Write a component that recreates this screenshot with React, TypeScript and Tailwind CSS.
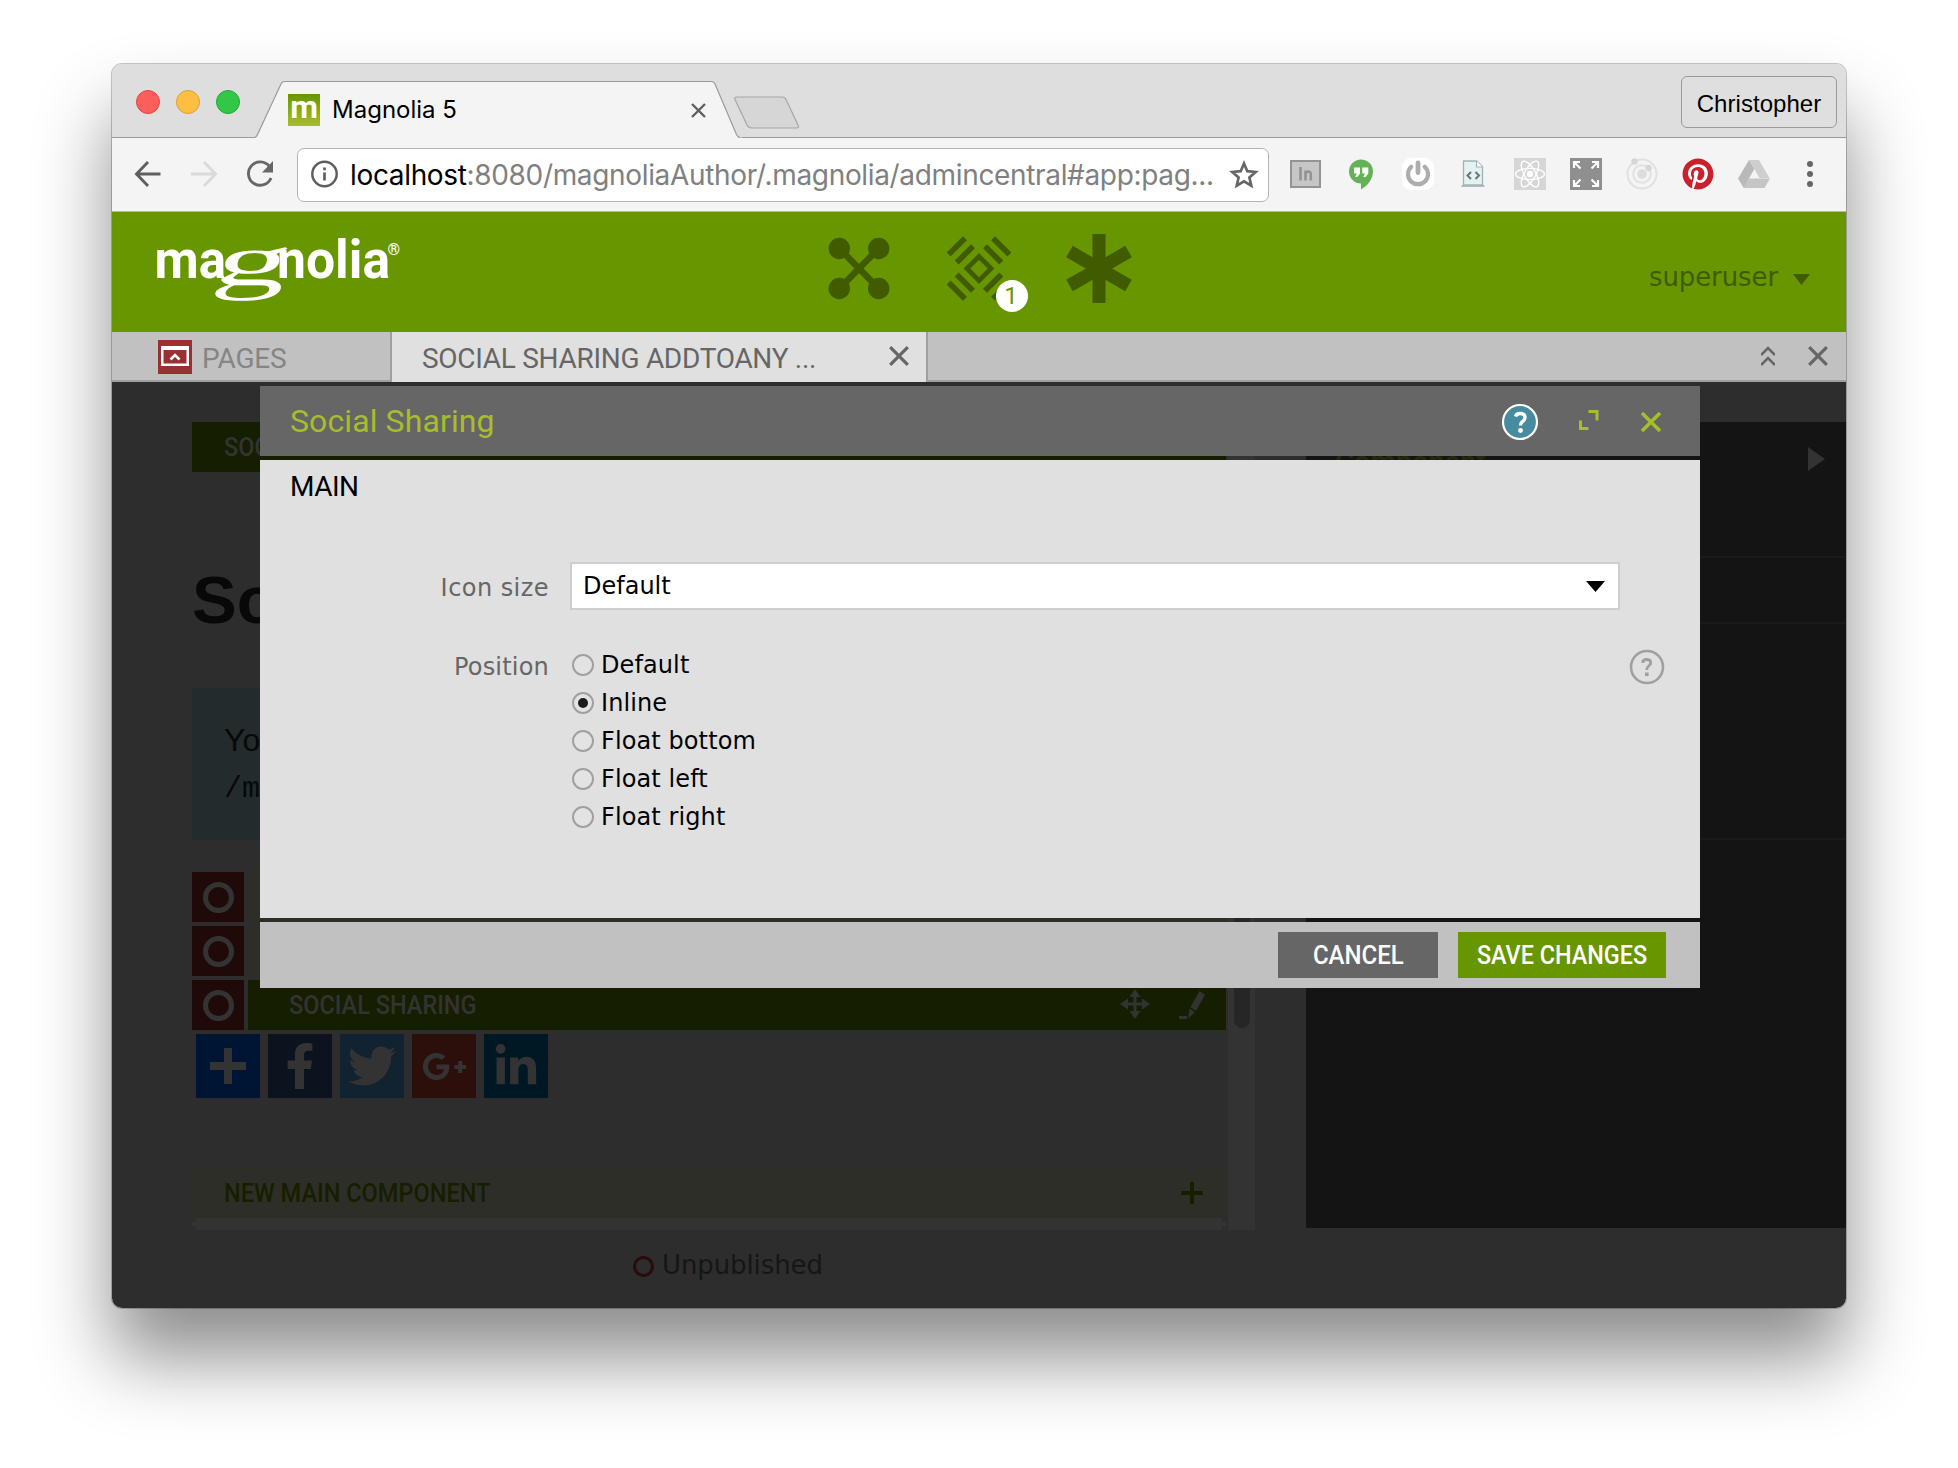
import React from "react";
import { FaFacebookF, FaGooglePlusG, FaLinkedinIn, FaPinterest, FaTwitter } from "react-icons/fa";

function WindowTabStrip() {
  return (
    <div className="flex h-[74px] shrink-0 items-start border-b border-[#9b9b9b] bg-[#dedede]">
      <div className="mt-[26px] ml-6 flex gap-4">
        <span className="size-6 rounded-full border border-[#e0443e] bg-[#fc5f5b]" />
        <span className="size-6 rounded-full border border-[#dea034] bg-[#fdbe41]" />
        <span className="size-6 rounded-full border border-[#23a833] bg-[#33c748]" />
      </div>
      <div className="relative mt-[17px] ml-[14px] h-[57px] w-[488px]">
        <svg className="absolute inset-0" width="488" height="57" viewBox="0 0 488 57">
          <path d="M0 57V56.5H1.5Q3 56 4 53.5L27 3Q28 .5 31 .5H457Q460 .5 461 3L482.500 53.500Q484 56.500 486 56.500H488V57Z" fill="#f4f4f4" />
          <path d="M0 56.500H.5Q2.500 56 3.500 53.500L27 3Q28 .5 31 .5H457Q460 .5 461 3L482.500 53.500Q484 56.500 486 56.500" fill="none" stroke="#9b9b9b" strokeWidth="1.2" />
        </svg>
        <div className="relative mt-[13px] flex h-8 items-center pl-[34px]">
          <span className="flex size-8 items-center justify-center bg-linear-to-b from-[#679600] to-[#a8bd2b] pb-1.5 font-['Roboto',sans-serif] text-[32px] leading-none font-bold text-white">m</span>
          <span className="-mt-px ml-[12px] font-['Inter',sans-serif] text-[24px] leading-8 whitespace-nowrap text-black">Magnolia 5</span>
          <svg className="mr-[36px] ml-auto" width="15" height="15" viewBox="0 0 15 15">
            <path d="M1 1L14 14M14 1L1 14" stroke="#5f5f5f" strokeWidth="2.400" />
          </svg>
        </div>
      </div>
      <svg className="mt-8 -ml-[10px]" width="70" height="34" viewBox="0 0 70 34">
        <path d="M5 1H50Q53 1 54 3.500L66 29Q67.500 32 64.500 32H20Q16.500 32 15 29L3 3.500Q2 1 5 1Z" fill="#d6d6d6" stroke="#a6a6a6" strokeWidth="1.200" />
      </svg>
      <button className="mt-3 mr-[9px] ml-auto flex h-[52px] w-[156px] items-center justify-center rounded-[6px] border border-[#9b9b9b] bg-[#dfdfdf] pt-[3px] font-['Liberation_Sans',sans-serif] text-[24px] leading-none tracking-[0.05px] text-black">Christopher</button>
    </div>
  );
}

function ExtensionIcons() {
  return (
    <div className="-mt-px ml-[21px] flex gap-6">
      <svg width="32" height="32" viewBox="0 0 32 32">
        <rect x="1" y="3" width="29" height="26" fill="#c6c6c6" stroke="#949494" strokeWidth="2" />
        <path d="M10.500 9V22.500M15.500 12.500V22.500M15.500 17Q15.500 13.500 18.200 13.500T20.800 17V22.500" stroke="#939393" strokeWidth="2.600" fill="none" />
      </svg>
      <svg width="32" height="32" viewBox="0 0 32 32">
        <path d="M15 1.500A12 12 0 0 0 15 25.500V31.500C22 27.500 27 20.500 27 13.500A12 12 0 0 0 15 1.500Z" fill="#63b255" />
        <path d="M8 9.500H14V15.500L11.300 19H9L10.800 15.500H8ZM16.300 9.500H22.300V15.500L19.600 19H17.300L19.100 15.500H16.300Z" fill="#fff" />
      </svg>
      <svg width="32" height="32" viewBox="0 0 32 32">
        <rect width="32" height="32" rx="9" fill="#fff" />
        <path d="M9.300 8.800A10 10 0 1 0 22.700 8.800" fill="none" stroke="#adadad" strokeWidth="4.200" strokeLinecap="round" />
        <path d="M16 5V14.500" stroke="#adadad" strokeWidth="4.800" strokeLinecap="round" />
      </svg>
      <svg width="32" height="32" viewBox="0 0 32 32">
        <path d="M3.500 28H26.500" stroke="#b5bcbc" strokeWidth="2" />
        <path d="M5.500 3H18.500L24.500 8.500V27H5.500Z" fill="#e6f1f1" stroke="#9fb5b5" strokeWidth="1.300" />
        <path d="M18.500 3V9H24.500" fill="#fff" stroke="#9fb5b5" strokeWidth="1.200" />
        <path d="M13 14L9.500 17.500L13 21M17.500 14L21 17.500L17.500 21" fill="none" stroke="#6d7474" strokeWidth="2" />
      </svg>
      <svg width="32" height="32" viewBox="0 0 32 32">
        <rect width="32" height="32" fill="#d6d6d6" />
        <g fill="none" stroke="#fff" strokeWidth="1.400">
          <ellipse cx="16" cy="16" rx="14.500" ry="5.600" />
          <ellipse cx="16" cy="16" rx="14.500" ry="5.600" transform="rotate(60 16 16)" />
          <ellipse cx="16" cy="16" rx="14.500" ry="5.600" transform="rotate(120 16 16)" />
        </g>
        <circle cx="16" cy="16" r="3.200" fill="#fff" />
      </svg>
      <svg width="32" height="32" viewBox="0 0 32 32">
        <rect width="32" height="32" fill="#8f8f8f" />
        <path d="M4 10V4H10M4.500 4.500L10.500 10.500M22 4H28V10M27.500 4.500L21.500 10.500M4 22V28H10M4.500 27.500L10.500 21.500M28 22V28H22M27.500 27.500L21.500 21.500" fill="none" stroke="#fff" strokeWidth="2.200" />
      </svg>
      <svg width="32" height="32" viewBox="0 0 32 32">
        <circle cx="16" cy="16" r="14.500" fill="none" stroke="#e1e1e1" strokeWidth="2" />
        <circle cx="16" cy="16" r="8.800" fill="none" stroke="#e1e1e1" strokeWidth="2" />
        <circle cx="16" cy="16" r="4.800" fill="#dcdcdc" />
        <circle cx="8.500" cy="3.500" r="3.200" fill="#d6d6d6" />
        <circle cx="22.500" cy="10" r="3.200" fill="#d6d6d6" />
      </svg>
      <span className="flex size-8 items-center justify-center rounded-full bg-white">
        <FaPinterest size={32} color="#ca202b" />
      </span>
      <svg width="32" height="32" viewBox="0 0 32 32">
        <path d="M11 2H21L31.500 20H21.500Z" fill="#cecece" />
        <path d="M11 2L16.200 11L5.800 30L0 20.500Z" fill="#b9b9b9" />
        <path d="M10.700 20.500H32L26.500 30H5.500Z" fill="#c5c5c5" />
      </svg>
      <svg width="32" height="32" viewBox="0 0 32 32" fill="#666">
        <circle cx="16" cy="6" r="3" />
        <circle cx="16" cy="16" r="3" />
        <circle cx="16" cy="26" r="3" />
      </svg>
    </div>
  );
}

function Toolbar() {
  return (
    <div className="flex h-[74px] shrink-0 items-center border-b border-[#b6b6b6] bg-[#f4f4f4]">
      <svg className="-mt-px ml-[22px]" width="28" height="28" viewBox="0 0 28 28" fill="none" stroke="#5f5f5f" strokeWidth="2.900">
        <path d="M26.500 14H3M14 2L2.500 14L14 26" />
      </svg>
      <svg className="-mt-px ml-7" width="28" height="28" viewBox="0 0 28 28" fill="none" stroke="#dadada" strokeWidth="2.900">
        <path d="M1 14H25M14 2L25.500 14L14 26" />
      </svg>
      <svg className="-mt-px ml-7" width="28" height="28" viewBox="0 0 28 28">
        <path d="M23.500 6.500A11.700 11.700 0 1 0 25 18" fill="none" stroke="#676767" strokeWidth="2.900" />
        <path d="M27 1V12.500H16Z" fill="#676767" />
      </svg>
      <div className="ml-[23px] flex h-[54px] w-[972px] items-center rounded-[7px] border border-[#b4b4b4] bg-white pl-3">
        <svg className="-mt-px" width="30" height="30" viewBox="0 0 30 30">
          <circle cx="14.500" cy="15" r="12.200" fill="none" stroke="#5f5f5f" strokeWidth="2.500" />
          <path d="M14.500 13.500V21.500M14.500 8.500V11.200" stroke="#5f5f5f" strokeWidth="2.700" />
        </svg>
        <span className="ml-[10px] font-['Inter',sans-serif] text-[28px] leading-none tracking-[-0.34px] whitespace-nowrap text-[#808080]">
          <span className="text-black">localhost</span>:8080/magnoliaAuthor/.magnolia/admincentral#app:pag...
        </span>
        <svg className="mr-[9px] ml-auto" width="30" height="30" viewBox="0 0 30 30">
          <path d="M15 3.500L18.300 11.200L26.700 12L20.400 17.500L22.300 25.700L15 21.400L7.700 25.700L9.600 17.500L3.300 12L11.700 11.200Z" fill="none" stroke="#666" strokeWidth="2.700" />
        </svg>
      </div>
      <ExtensionIcons />
    </div>
  );
}

function MagnoliaLogo() {
  return (
    <svg className="ml-[38px] block" width="260" height="120" viewBox="150 212 260 120" fill="#fff">
      <g fontFamily="Roboto, sans-serif" fontWeight="700" fontSize="54">
        <text x="154.500" y="277.500" textLength="71.500" lengthAdjust="spacingAndGlyphs">ma</text>
        <text x="277" y="277.500" textLength="113" lengthAdjust="spacingAndGlyphs">nolia</text>
      </g>
      <text transform="translate(211 284.500) skewX(-14) scale(2.720 1.360)" fontFamily="'Liberation Serif', serif" fontSize="54">g</text>
      <text x="387.500" y="255" fontFamily="Roboto, sans-serif" fontWeight="700" fontSize="16">®</text>
    </svg>
  );
}

function AppHeader() {
  return (
    <header className="grid h-[120px] shrink-0 grid-cols-[1fr_auto_1fr] bg-[#679600]">
      <MagnoliaLogo />
      <div className="flex pt-[20px]">
        <svg width="120" height="74" viewBox="799 232 120 74" fill="#405b00" stroke="#405b00">
          <path d="M839.300 248.500L878.700 288.500M878.700 248.500L839.300 288.500" strokeWidth="6.500" />
          <g stroke="none">
            <circle cx="839.300" cy="248.500" r="10.700" />
            <circle cx="878.700" cy="248.500" r="10.700" />
            <circle cx="839.300" cy="288.500" r="10.700" />
            <circle cx="878.700" cy="288.500" r="10.700" />
          </g>
        </svg>
        <div className="relative">
          <svg width="120" height="74" viewBox="-60 -36.500 120 74" fill="#405b00">
            <rect x="-8.500" y="-8.500" width="17" height="17" transform="rotate(45)" fill="none" stroke="#405b00" strokeWidth="4.800" />
            {[45, 135, 225, 315].map((a) => (
              <g key={a} transform={"rotate(" + a + ")"}>
                <rect x="17.200" y="-11.500" width="5.600" height="23" />
                <rect x="28.600" y="-11.500" width="5.600" height="23" />
              </g>
            ))}
          </svg>
          <span className="absolute top-[48px] left-[77px] flex size-8 items-center justify-center rounded-full bg-white pr-0.5 font-['Roboto',sans-serif] text-[24px] leading-none text-[#679600]">1</span>
        </div>
        <svg width="120" height="74" viewBox="-60 -36.500 120 74" stroke="#405b00" strokeWidth="13">
          <path d="M0 -34.500V34.500M-29.500 -17L29.500 17M29.500 -17L-29.500 17" />
        </svg>
      </div>
      <div className="flex items-center justify-end pt-[10px] pr-[36px]">
        <span className="font-['DejaVu_Sans',sans-serif] text-[26px] leading-none tracking-[-0.1px] text-[#405b00]">superuser</span>
        <svg className="mt-1 ml-[15px]" width="17" height="11" viewBox="0 0 17 11">
          <path d="M0 0H17L8.500 11Z" fill="#405b00" />
        </svg>
      </div>
    </header>
  );
}

function AppTabs() {
  return (
    <nav className="flex h-[50px] shrink-0 bg-[#c1c1c1] font-['Roboto',sans-serif] text-[28px] leading-none">
      <div className="flex w-[280px] items-center border-r-2 border-b-2 border-[#9f9f9f] pl-[46px]">
        <svg className="mt-0.5" width="34" height="34" viewBox="0 0 34 34">
          <rect width="34" height="34" fill="#9b3033" />
          <path d="M3 6H31V26H3ZM5.500 10V23.500H28.500V10Z" fill="#fff" fillRule="evenodd" />
          <path d="M12.500 19.500L17 15L21.500 19.500" fill="none" stroke="#fff" strokeWidth="2.600" />
        </svg>
        <span className="mt-[5px] ml-[10px] tracking-[-0.22px] text-[#858585]">PAGES</span>
      </div>
      <div className="flex w-[536px] items-center border-r-2 border-[#9f9f9f] bg-[#e0e0e0] pb-0.5 pl-[30px]">
        <span className="mt-[5px] tracking-[-0.29px] whitespace-nowrap text-[#666]">SOCIAL SHARING ADDTOANY ...</span>
        <svg className="mr-[17px] ml-auto" width="20" height="20" viewBox="0 0 20 20">
          <path d="M1.200 1.200L18.800 18.800M18.800 1.200L1.200 18.800" stroke="#666" strokeWidth="3.200" />
        </svg>
      </div>
      <div className="flex flex-1 items-center justify-end border-b-2 border-[#9f9f9f] pr-[18px]">
        <svg className="mr-[33px]" width="14" height="20" viewBox="0 0 14 20" fill="none" stroke="#666" strokeWidth="2.600">
          <path d="M0 9L7 2L14 9M0 19L7 12L14 19" />
        </svg>
        <svg width="20" height="20" viewBox="0 0 20 20">
          <path d="M1.200 1.200L18.800 18.800M18.800 1.200L1.200 18.800" stroke="#666" strokeWidth="3.200" />
        </svg>
      </div>
    </nav>
  );
}

function StatusTile() {
  return (
    <span className="flex h-[50px] w-[52px] shrink-0 items-center justify-center bg-[#200909]">
      <span className="size-[31px] rounded-full border-[5px] border-[#333]" />
    </span>
  );
}

function PageEditor() {
  return (
    <section className="mt-10 ml-20 flex w-[1063px] flex-col">
      <div className="flex">
        <div className="w-[1034px] shrink-0">
          <div className="flex h-[50px] items-center bg-[#161e00] pt-px pl-8 font-['Roboto',sans-serif] text-[25px] leading-none font-medium text-[#333]">
            <span className="inline-block origin-left scale-x-[0.94]">SOC</span>
          </div>
          <h1 className="mt-[88px] font-['Liberation_Sans',sans-serif] text-[67px] leading-[80px] font-bold text-[#080808]">Soc</h1>
          <div className="mt-12 h-[152px] bg-[#242b2d] pt-[30px] pl-8 text-[#080808]">
            <p className="font-['Liberation_Sans',sans-serif] text-[32px] leading-[44px]">You</p>
            <p className="mt-[5px] font-['Liberation_Mono',monospace] text-[30px] leading-[44px]">/m</p>
          </div>
          <div className="mt-8 flex flex-col gap-1">
            <div className="flex gap-1">
              <StatusTile />
              <span className="flex-1 bg-[#2e2e29]" />
            </div>
            <div className="flex gap-1">
              <StatusTile />
              <span className="flex-1 bg-[#2e2e29]" />
            </div>
            <div className="flex gap-1">
              <StatusTile />
              <div className="flex flex-1 items-center bg-[#161e00] pr-[19px] pl-[41px]">
                <span className="inline-block origin-left scale-x-[0.94] pt-px font-['Roboto',sans-serif] text-[25px] leading-none font-medium text-[#333]">SOCIAL SHARING</span>
                <svg className="mt-[-2px] ml-auto" width="30" height="30" viewBox="0 0 30 30" fill="#333">
                  <path d="M15 0L20.500 8H16.500V13.500H22V9.500L30 15L22 20.500V16.500H16.500V22H20.500L15 30L9.500 22H13.500V16.500H8V20.500L0 15L8 9.500V13.500H13.500V8H9.500Z" />
                </svg>
                <svg className="ml-[29px]" width="28" height="28" viewBox="0 0 28 28" fill="#333">
                  <path d="M20.500 0L26 3.800L17 20L11.500 16Z" />
                  <path d="M10.700 17.500L15.800 21.200L9 27.500Z" />
                  <path d="M0 25H8V28H0Z" />
                </svg>
              </div>
            </div>
          </div>
          <div className="mt-1 flex gap-2 pl-1 text-[#333]">
            <span className="flex size-16 items-center justify-center bg-[#001433]">
              <svg width="36" height="36" viewBox="0 0 36 36" fill="currentColor">
                <path d="M14 0H22V14H36V22H22V36H14V22H0V14H14Z" />
              </svg>
            </span>
            <span className="flex size-16 items-center justify-center bg-[#0c121e]"><FaFacebookF size={46} /></span>
            <span className="flex size-16 items-center justify-center bg-[#112230]"><FaTwitter size={48} /></span>
            <span className="flex size-16 items-center justify-center bg-[#2c0f0b]">
              <FaGooglePlusG size={45} />
            </span>
            <span className="flex size-16 items-center justify-center bg-[#001824] pt-0.5"><FaLinkedinIn size={46} /></span>
          </div>
          <div className="mt-[70px] flex h-[50px] items-center justify-between bg-[#2e2e29] pr-[23px] pl-8">
            <span className="inline-block origin-left scale-x-[0.942] font-['Roboto',sans-serif] text-[25px] leading-none font-medium text-[#161e00]">NEW MAIN COMPONENT</span>
            <svg width="22" height="22" viewBox="0 0 22 22">
              <path d="M11 0V22M0 11H22" stroke="#161e00" strokeWidth="4" />
            </svg>
          </div>
          <div className="flex h-3 items-center">
            <span className="size-1 bg-[#333]" />
            <span className="h-3 flex-1 bg-[#333]" />
            <span className="size-1 bg-[#333]" />
          </div>
        </div>
        <div className="ml-0.5 flex w-[27px] justify-center bg-[#333]">
          <span className="mt-[100px] h-[506px] w-4 rounded-full bg-[#262626]" />
        </div>
      </div>
      <div className="mt-[17px] ml-[441px] flex h-9 items-center">
        <span className="mt-[3px] size-[21px] rounded-full border-[3px] border-[#2a0a0a]" />
        <span className="ml-[8px] font-['DejaVu_Sans',sans-serif] text-[26px] leading-none tracking-[-0.1px] text-[#161616]">Unpublished</span>
      </div>
    </section>
  );
}

function ComponentPanel() {
  return (
    <aside className="mt-10 ml-[51px] flex h-[806px] w-[540px] flex-col bg-[#141414]">
      <div className="flex h-[134px] items-start pt-[25px] pr-[21px] pl-[29px]">
        <span className="mt-px font-['Roboto',sans-serif] text-[29px] leading-none font-medium text-[#24290b]">Component</span>
        <svg className="ml-auto" width="17" height="24" viewBox="0 0 17 24">
          <path d="M0 0L17 12L0 24Z" fill="#333" />
        </svg>
      </div>
      <div className="h-[66px] border-t-2 border-[#1a1a1a]" />
      <div className="h-[216px] border-t-2 border-[#1a1a1a]" />
      <div className="flex-1 border-t-2 border-[#1a1a1a]" />
    </aside>
  );
}

const POSITIONS = ["Default", "Inline", "Float bottom", "Float left", "Float right"];

function SharingDialog() {
  return (
    <div className="absolute top-1 left-[148px] flex w-[1440px] flex-col gap-1">
      <div className="flex h-[70px] items-center bg-[#666] pr-[29px] pl-[30px]">
        <h2 className="font-['Roboto',sans-serif] text-[32px] leading-none tracking-[0.1px] text-[#a8bd2b]">Social Sharing</h2>
        <svg className="mt-0.5 ml-auto" width="40" height="40" viewBox="0 0 40 40">
          <circle cx="20" cy="20" r="17" fill="#468c9e" stroke="#fff" strokeWidth="2.200" />
          <path d="M15.500 14.500Q16.500 11.500 20 11.500Q25 11.500 25 15.500Q25 18 22.500 19.500Q20.500 20.800 20.500 23.500" fill="none" stroke="#fff" strokeWidth="3.400" />
          <circle cx="20.500" cy="28.500" r="2.400" fill="#fff" />
        </svg>
        <svg className="mt-[-2px] ml-7" width="40" height="40" viewBox="0 0 40 40" fill="none" stroke="#a8bd2b" strokeWidth="3">
          <path d="M20.500 11.500H29V20.500M12.500 20.500V28.500H20.500" />
        </svg>
        <svg className="mt-0.5 ml-[23px]" width="40" height="40" viewBox="0 0 40 40">
          <path d="M11 11L29 29M29 11L11 29" stroke="#a8bd2b" strokeWidth="3.600" />
        </svg>
      </div>
      <div className="h-[458px] bg-[#e0e0e0] pt-[9px]">
        <h3 className="pl-[30px] font-['Roboto',sans-serif] text-[28px] leading-9 tracking-[-0.52px] text-black">MAIN</h3>
        <div className="mt-[57px] flex font-['DejaVu_Sans',sans-serif] text-[24px]">
          <label className="mt-0.5 h-[46px] w-[290px] pr-px text-right leading-[48px] tracking-[0.45px] text-[#666]">Icon size</label>
          <div className="ml-5 flex h-12 w-[1050px] items-center justify-between border-2 border-[#cecece] bg-white pr-[13px] pl-[11px]">
            <span className="leading-none text-black">Default</span>
            <svg width="19" height="11" viewBox="0 0 19 11">
              <path d="M0 0H19L9.500 11Z" fill="#000" />
            </svg>
          </div>
        </div>
        <div className="mt-9 flex font-['DejaVu_Sans',sans-serif] text-[24px]">
          <label className="mt-[2px] w-[290px] pr-px text-right leading-[38px] tracking-[0.2px] text-[#666]">Position</label>
          <ul className="ml-[22px]">
            {POSITIONS.map((name) => (
              <li key={name} className="flex h-[38px] items-center">
                <span className="flex size-[22px] items-center justify-center rounded-full border-2 border-[#a0a0a0] bg-[#e3e3e3]">
                  {name === "Inline" && <span className="size-[10px] rounded-full bg-[#1c1a1c]" />}
                </span>
                <span className="ml-[7px] leading-none tracking-[0.1px] whitespace-nowrap text-black">{name}</span>
              </li>
            ))}
          </ul>
          <svg className="mt-[3px] mr-[35px] ml-auto" width="36" height="36" viewBox="0 0 36 36">
            <circle cx="18" cy="18" r="16" fill="none" stroke="#a0a0a0" strokeWidth="2.600" />
            <path d="M13.700 14Q13.700 10.500 17.500 10.500Q21.700 10.500 21.700 13.700Q21.700 15.500 19.700 17Q17.700 18.500 17.700 21" fill="none" stroke="#a0a0a0" strokeWidth="2.800" />
            <rect x="16" y="23.500" width="3.600" height="3.600" fill="#a0a0a0" />
          </svg>
        </div>
      </div>
      <div className="flex h-[66px] items-center justify-end gap-5 bg-[#c1c1c1] pr-[34px] font-['Roboto',sans-serif] text-[25px] leading-none font-medium text-white">
        <button className="flex h-[46px] w-40 items-center justify-center bg-[#666] pt-px">
          <span className="inline-block scale-x-[0.96]">CANCEL</span>
        </button>
        <button className="flex h-[46px] w-52 items-center justify-center bg-[#679600] pt-px whitespace-nowrap">
          <span className="inline-block scale-x-[0.935]">SAVE CHANGES</span>
        </button>
      </div>
    </div>
  );
}

export default function App() {
  return (
    <div className="h-[1468px] w-[1958px] overflow-hidden bg-white pt-16 pl-28">
      <div className="h-[1244px] w-[1734px] rounded-[10px] shadow-[0_0_0_1px_rgba(0,0,0,0.22),0_50px_76px_rgba(0,0,0,0.45)]">
        <div className="flex h-full flex-col overflow-hidden rounded-[10px]">
          <WindowTabStrip />
          <Toolbar />
          <AppHeader />
          <AppTabs />
          <main className="relative flex flex-1 items-start bg-[#2d2d2d]">
            <PageEditor />
            <ComponentPanel />
            <SharingDialog />
          </main>
        </div>
      </div>
    </div>
  );
}
